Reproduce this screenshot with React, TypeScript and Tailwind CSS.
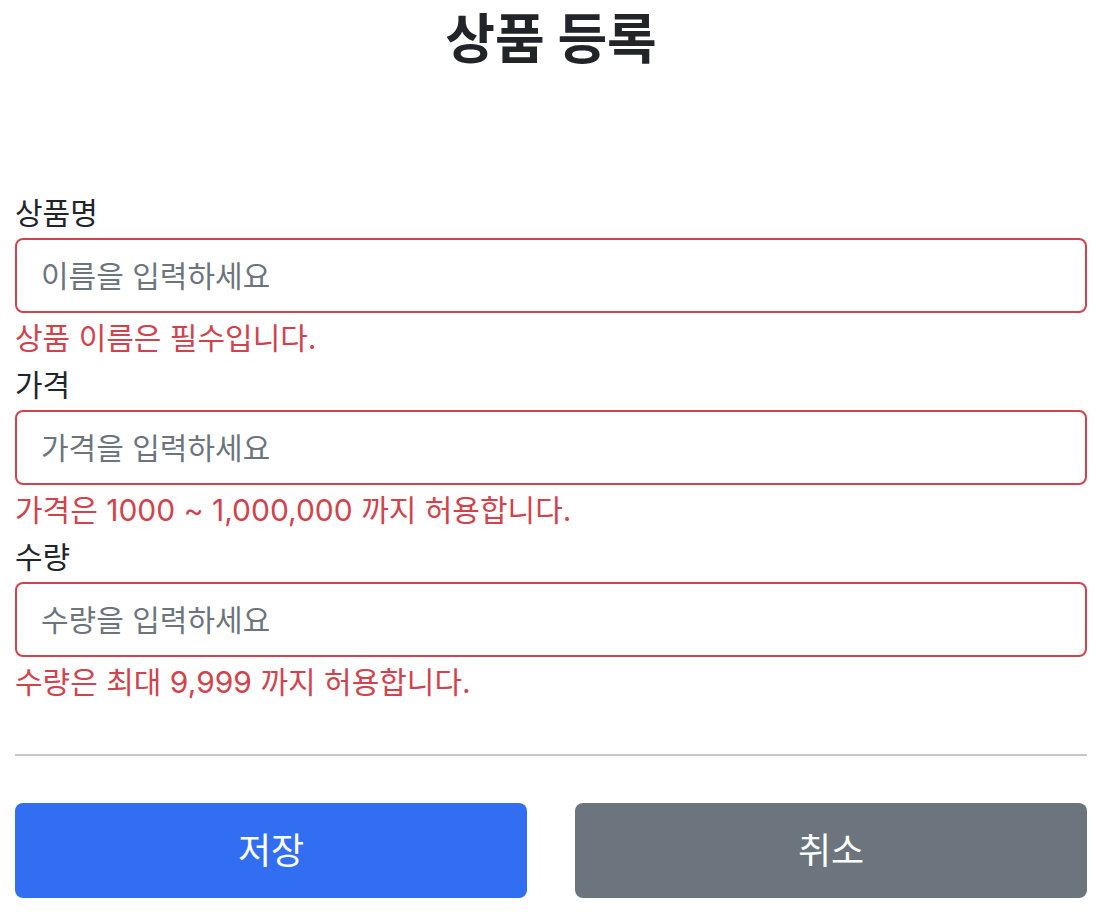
const fields = [
  { label: '상품명', placeholder: '이름을 입력하세요', error: '상품 이름은 필수입니다.' },
  { label: '가격', placeholder: '가격을 입력하세요', error: '가격은 1000 ~ 1,000,000 까지 허용합니다.' },
  { label: '수량', placeholder: '수량을 입력하세요', error: '수량은 최대 9,999 까지 허용합니다.' },
];

const App = () => {
  return (
    <div className="w-[1102px] px-[15px] pt-[10px] bg-white text-[#212529] font-['Inter','Noto_Sans_CJK_KR',sans-serif]">
      <h1 className="text-center text-[54px] font-bold leading-[60px]">상품 등록</h1>

      <form className="mt-[122px]" onSubmit={(e) => e.preventDefault()}>
        {fields.map((f, i) => (
          <div key={f.label} className={i > 0 ? 'mt-[8px]' : ''}>
            <label className="block text-[30px] leading-[35px] pt-[4px] mb-[7px]">{f.label}</label>
            <input
              type="text"
              placeholder={f.placeholder}
              className="block w-full h-[75px] px-[24px] text-[30px] border-2 border-[#d0434d] rounded-[8px] outline-none placeholder:text-[#6c757d]"
            />
            <div className="mt-[4px] pt-[4px] text-[30px] leading-[35px] text-[#d0434d]">{f.error}</div>
          </div>
        ))}

        <hr className="mt-[54px] border-0 h-[2px] bg-[#c8c8c8]" />

        <div className="flex gap-[48px] mt-[47px]">
          <button type="submit" className="flex-1 h-[95px] rounded-[8px] bg-[#316ef2] text-white text-[36px]">
            저장
          </button>
          <button type="button" className="flex-1 h-[95px] rounded-[8px] bg-[#6c757d] text-white text-[36px]">
            취소
          </button>
        </div>
      </form>
    </div>
  );
};

export default App;
